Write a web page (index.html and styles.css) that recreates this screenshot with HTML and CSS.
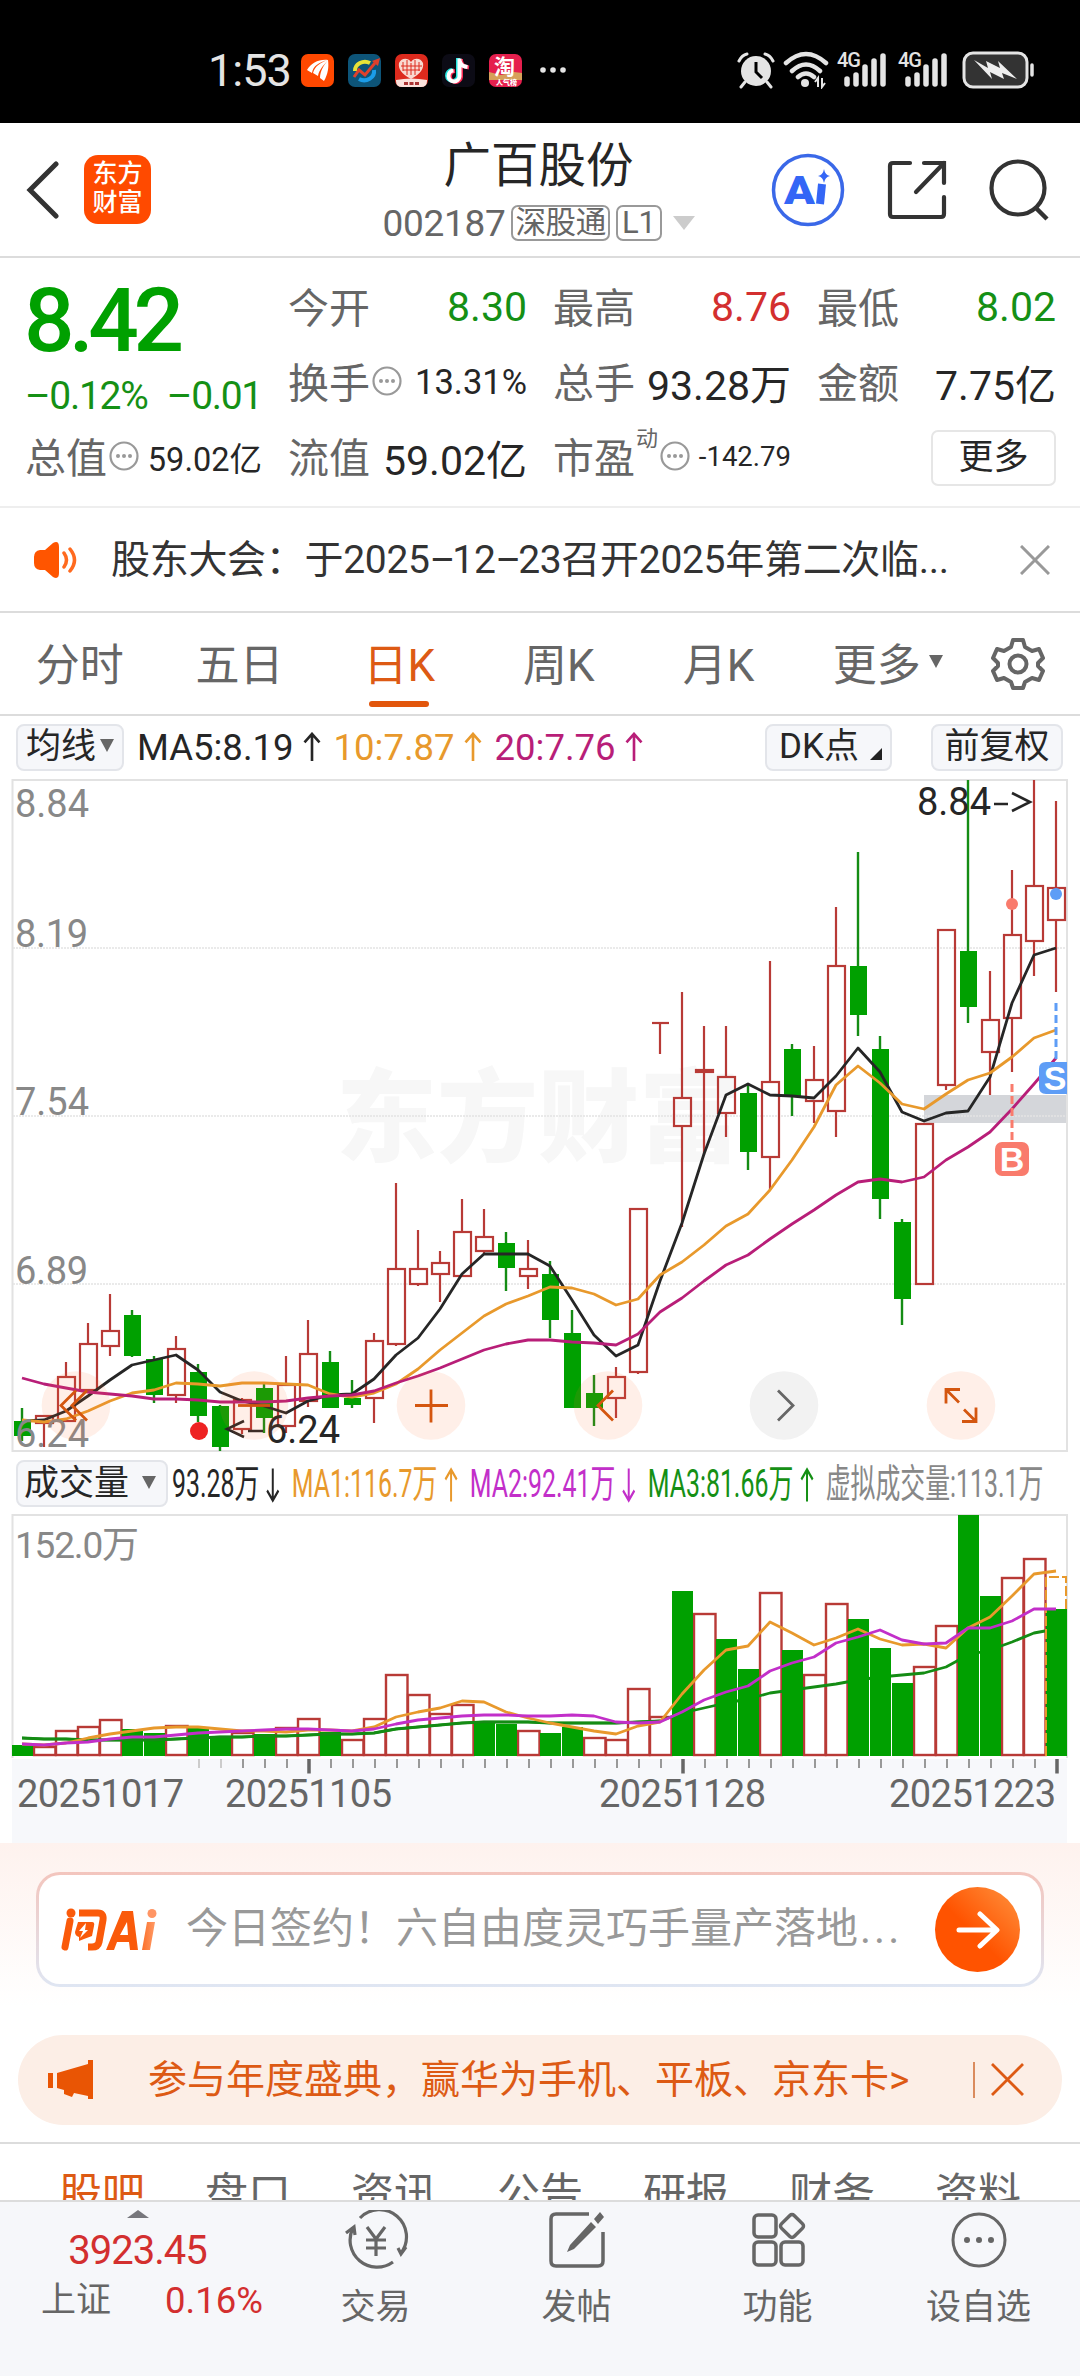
FILE: index.html
```html
<!DOCTYPE html>
<html lang="zh-CN">
<head>
    <meta charset="UTF-8">
    <meta name="viewport" content="width=device-width, initial-scale=1.0">
    <title>广百股份 002187</title>
    <link rel="stylesheet" href="styles.css">
</head>
<body>
    <svg class="defs" width="0" height="0">
        <symbol id="up" viewBox="0 0 20 32"><path d="M10 31V2M2 11L10 2l8 9" fill="none" stroke="currentColor" stroke-width="2.8"/></symbol>
        <symbol id="down" viewBox="0 0 20 32"><path d="M10 1v29M2 21l8 9 8-9" fill="none" stroke="currentColor" stroke-width="2.8"/></symbol>
        <symbol id="info" viewBox="0 0 30 30"><circle cx="15" cy="15" r="13.5" fill="none" stroke="#999" stroke-width="2.2"/><g fill="#999"><circle cx="9" cy="15" r="2"/><circle cx="15" cy="15" r="2"/><circle cx="21" cy="15" r="2"/></g></symbol>
    </svg>

    <!-- 状态栏 -->
    <div class="status-bar">
        <span class="time">1:53</span>
        <div class="apps">
            <svg width="33" height="33" viewBox="0 0 33 33"><rect width="33" height="33" rx="7" fill="#ff4800"/><path d="M6 16C10 9 18 5 27 6C18 8 12 12 11 19zM12 19C14 12 20 8 27 6C22 12 18 16 17 22zM19 24C19 17 23 11 27 6C28 13 27 20 23 27z" fill="#fff"/></svg>
            <svg width="33" height="33" viewBox="0 0 33 33"><rect width="33" height="33" rx="7" fill="#0d5478"/><path d="M7 17a10 9 0 0 1 15-8" fill="none" stroke="#e8e337" stroke-width="4"/><path d="M26 16a10 9 0 0 1-15 9" fill="none" stroke="#1b9ce8" stroke-width="4"/><path d="M6 23l5-7 6 5 10-12" fill="none" stroke="#e0402c" stroke-width="3"/><path d="M24 7l8-3-2 8z" fill="#e0402c"/></svg>
            <svg width="33" height="33" viewBox="0 0 33 33"><rect width="33" height="33" rx="7" fill="#dd2a1d"/><path d="M16 25C6 20 3 14 4 9c2-5 9-6 12-1 3-5 10-4 12 1 1 5-2 11-12 16z" fill="#f9d9d0"/><path d="M8 8v9M12 6v15M16 9v12M20 6v15M24 8v9M6 12h21M8 16h17" stroke="#dd2a1d" stroke-width="1"/><path d="M1 26q15-3 31 0v1q0 6-6 6H7q-6 0-6-6z" fill="#fbe2dc"/><path d="M9 28h4v3H9zM14.500 28h4v3h-4zM20 28h4v3h-4z" fill="#a33"/></svg>
            <svg width="33" height="33" viewBox="0 0 33 33"><rect width="33" height="33" rx="7" fill="#0c0b15"/><g fill="none" stroke-width="4"><path d="M17 4v18a5.500 5.500 0 1 1-6-6M17 6c1 5 4 6 8 6.500" stroke="#26e5e0" transform="translate(-1 0)"/><path d="M17 4v18a5.500 5.500 0 1 1-6-6M17 6c1 5 4 6 8 6.500" stroke="#fb2b54" transform="translate(2 1)"/><path d="M17 4v18a5.500 5.500 0 1 1-6-6M17 6c1 5 4 6 8 6.500" stroke="#fff" transform="translate(.5 .5)"/></g></svg>
            <svg width="33" height="33" viewBox="0 0 33 33"><rect width="33" height="33" rx="7" fill="#e51f4d"/><path d="M0 18l12 3 13-3 8 1v7H0z" fill="#d6a05a"/><text x="5" y="20" font-size="21" font-weight="700" fill="#fff">淘</text><text x="7" y="31" font-size="7" font-weight="900" fill="#fff">人气榜</text></svg>
        </div>
        <svg class="more-dots" width="28" height="8" viewBox="0 0 28 8"><g fill="#e4e4e4"><circle cx="4" cy="4" r="2.800"/><circle cx="14" cy="4" r="2.800"/><circle cx="24" cy="4" r="2.800"/></g></svg>
        <div class="sys">
            <svg width="38" height="38" viewBox="0 0 38 38"><circle cx="19" cy="20" r="15" fill="#e4e4e4"/><path d="M19 11v10l6 6" fill="none" stroke="#000" stroke-width="3"/><path d="M2 10Q5 4 10 3M36 10Q33 4 28 3M8 31l-4 5M30 31l4 5" stroke="#e4e4e4" stroke-width="3" fill="none" stroke-linecap="round"/></svg>
            <svg width="46" height="38" viewBox="0 0 46 38"><g fill="none" stroke="#e4e4e4" stroke-width="4.500" stroke-linecap="round"><path d="M3 12Q23-6 43 12M9 20Q23 7 37 20M15 26Q23 19 31 26"/></g><circle cx="22" cy="32" r="4" fill="#e4e4e4"/><path d="M35 36v-9l-3 4M39 27v9l3-4" fill="none" stroke="#e4e4e4" stroke-width="2"/></svg>
            <div class="signal"><span>4G</span><svg width="50" height="38" viewBox="0 0 50 38"><path d="M10 33v-5M19 33v-9M28 33V16M37 33V10M46 33V5" stroke="#e4e4e4" stroke-width="5.500" stroke-linecap="round"/></svg></div>
            <div class="signal sig2"><span>4G</span><svg width="50" height="38" viewBox="0 0 50 38"><path d="M10 33v-5M19 33v-9M28 33V16M37 33V10M46 33V5" stroke="#e4e4e4" stroke-width="5.500" stroke-linecap="round"/></svg></div>
            <svg width="74" height="40" viewBox="0 0 74 40"><rect x="2" y="3" width="63" height="34" rx="9" fill="#333" stroke="#e4e4e4" stroke-width="3"/><path d="M12 10l14 8-2-7 14 7-2-7 19 18-15-6 2 6-14-7 2 7z" fill="#eee"/><path d="M70 15v10" stroke="#e4e4e4" stroke-width="3.500" stroke-linecap="round"/></svg>
        </div>
    </div>

    <!-- 标题栏 -->
    <header class="header">
        <div class="header-left">
            <svg width="34" height="58" viewBox="0 0 34 58"><path d="M30 3L4 29l26 26" fill="none" stroke="#333" stroke-width="5" stroke-linecap="round"/></svg>
            <div class="brand">东方<br>财富</div>
        </div>
        <div class="stock">
            <h1>广百股份</h1>
            <div class="stock-code"><span>002187</span><i class="tag">深股通</i><i class="tag">L1</i><b class="tri"></b></div>
        </div>
        <div class="header-right">
            <svg width="74" height="74" viewBox="0 0 74 74"><circle cx="37" cy="37" r="34.500" fill="none" stroke="#3a68e8" stroke-width="3.500"/><text x="13" y="51" font-size="39" font-weight="900" fill="#3466f6" textLength="31" lengthAdjust="spacingAndGlyphs">A</text><path d="M51 31l-2 20" stroke="#3466f6" stroke-width="8"/><path d="M53 16q1 6 6 7-5 1-6 7-1-6-6-7 5-1 6-7z" fill="#3466f6"/></svg>
            <svg width="60" height="60" viewBox="0 0 60 60"><path d="M23 3H6q-3 0-3 3v48q0 3 3 3h48q3 0 3-3V37M37 3h20v20M57 3L29 32" fill="none" stroke="#333" stroke-width="4.200" stroke-linecap="round"/></svg>
            <svg width="62" height="62" viewBox="0 0 62 62"><circle cx="29" cy="29" r="26.500" fill="none" stroke="#333" stroke-width="4.200"/><path d="M47 49l11 11" stroke="#333" stroke-width="4.500"/></svg>
        </div>
    </header>

    <!-- 行情数据 -->
    <section class="quote">
        <div class="quote-main">
            <div class="price">8.42</div>
            <div class="change"><span>–0.12%</span><span>–0.01</span></div>
            <div class="cell"><label>总值</label><svg class="info"><use href="#info"/></svg><span class="num s32">59.02亿</span></div>
        </div>
        <div class="quote-grid">
            <div class="cell"><label>今开</label><span class="num green">8.30</span></div>
            <div class="cell"><label>最高</label><span class="num red">8.76</span></div>
            <div class="cell"><label>最低</label><span class="num green">8.02</span></div>
            <div class="cell"><label>换手</label><svg class="info"><use href="#info"/></svg><span class="num s35">13.31%</span></div>
            <div class="cell"><label>总手</label><span class="num">93.28万</span></div>
            <div class="cell"><label>金额</label><span class="num">7.75亿</span></div>
            <div class="cell"><label>流值</label><span class="num">59.02亿</span></div>
            <div class="cell"><label>市盈</label><sup>动</sup><svg class="info"><use href="#info"/></svg><span class="num s28">-142.79</span></div>
            <div class="cell"><button class="more-btn">更多</button></div>
        </div>
    </section>

    <!-- 公告 -->
    <div class="notice">
        <svg width="46" height="38" viewBox="0 0 46 38"><path d="M7 9h5L20 2q6-3 6 4v26q0 7-6 4l-8-7H7q-6-1-6-7v-6q0-6 6-7z" fill="#ff5500"/><path d="M31 12q5 7 0 14M37 8q9 11 0 22" fill="none" stroke="#ff6a1f" stroke-width="3.500" stroke-linecap="round"/></svg>
        <p>股东大会：于2025<i>–</i>12<i>–</i>23召开2025年第二次临...</p>
        <svg width="30" height="30" viewBox="0 0 30 30"><path d="M1 1l28 28M29 1L1 29" stroke="#999" stroke-width="3"/></svg>
    </div>

    <!-- 周期切换 -->
    <nav class="period">
        <a>分时</a><a>五日</a><a class="active">日K</a><a>周K</a><a>月K</a>
        <a class="period-more">更多<b class="tri"></b></a>
        <a class="gear"><svg width="54" height="54" viewBox="0 0 54 54"><g fill="none" stroke="#666" stroke-width="4" stroke-linejoin="round"><path d="M22 3h10l2 7 7 4 7-2 4 9-5 5v3l5 5-4 9-7-2-7 4-2 6H22l-2-6-7-4-7 2-4-9 5-5v-3l-5-5 4-9 7 2 7-4z"/><circle cx="27" cy="27" r="8.500"/></g></svg></a>
    </nav>

    <div class="ma-row">
        <button class="chip">均线<b class="tri"></b></button>
        <span class="ma5">MA5:8.19<svg><use href="#up"/></svg></span>
        <span class="ma10">10:7.87<svg><use href="#up"/></svg></span>
        <span class="ma20">20:7.76<svg><use href="#up"/></svg></span>
        <button class="chip dk">DK点<b class="corner"></b></button>
        <button class="chip fq">前复权</button>
    </div>

    <svg id="kline" class="chart" width="1080" height="676" viewBox="0 778 1080 676"></svg>

    <div class="vol-row">
        <button class="chip">成交量<b class="tri"></b></button>
        <div class="vol-text">
            <span>93.28万<svg><use href="#down"/></svg></span>
            <span class="ma10">MA1:116.7万<svg><use href="#up"/></svg></span>
            <span class="violet">MA2:92.41万<svg><use href="#down"/></svg></span>
            <span class="green">MA3:81.66万<svg><use href="#up"/></svg></span>
            <span class="gray">虚拟成交量:113.1万</span>
        </div>
    </div>

    <svg id="volume" class="chart" width="1080" height="330" viewBox="0 1513 1080 330"></svg>

    <!-- 问AI -->
    <section class="ask">
        <div class="ask-box">
            <svg width="98" height="44" viewBox="0 0 98 44">
                <defs><linearGradient id="og" x1="0" x2="1"><stop offset=".6" stop-color="#fa5a0a"/><stop offset="1" stop-color="#ff9a66"/></linearGradient></defs>
                <g fill="none" stroke="#fa5a0a" stroke-width="7"><path d="M10 13L5 39" stroke-linecap="round"/><path d="M19 5h19q6 0 5 7l-4 22q-1 5-7 5h-4"/></g>
                <circle cx="11" cy="5" r="4.500" fill="#fa5a0a"/>
                <path d="M18 14h14q3 0 2 4l-2 10-8 3-5 2v-4q-4-1-4-5z" fill="#fa5a0a"/><path d="M26 15l-7 8h4l-3 7 8-8h-3z" fill="#fff"/>
                <path d="M46 42L62 3h11l5 39h-8l-1-8H57l-3 8zM60 27h8l-1-13zM82 42l5-28h8l-5 28z" fill="url(#og)"/><circle cx="92" cy="5.500" r="4.500" fill="#ff9564"/>
            </svg>
            <p>今日签约！六自由度灵巧手量产落地<i>...</i></p>
            <div class="go"><svg width="44" height="40" viewBox="0 0 44 40"><path d="M3 20h37M24 4l17 16-17 16" fill="none" stroke="#fff" stroke-width="5" stroke-linecap="round" stroke-linejoin="round"/></svg></div>
        </div>
    </section>

    <div class="promo">
        <svg width="46" height="40" viewBox="0 0 46 40"><path d="M0 13h5v15H0zM9 13L40 4V0h5v39h-5v-3l-14-3-2 4-8-3v-4l-7-2z" fill="#e95504"/></svg>
        <p>参与年度盛典，赢华为手机、平板、京东卡&gt;</p>
        <svg class="promo-close" width="52" height="36" viewBox="0 0 52 36"><path d="M1 0v36" stroke="#cf6a30" stroke-width="1.500"/><path d="M19 2l31 31M50 2L19 33" stroke="#dd5a14" stroke-width="2.800"/></svg>
    </div>

    <nav class="sub-tabs">
        <a class="active">股吧</a><a>盘口</a><a>资讯</a><a>公告</a><a>研报</a><a>财务</a><a>资料</a>
    </nav>

    <!-- 底部栏 -->
    <footer class="bottom">
        <div class="index">
            <b class="tri-up"></b>
            <div class="index-val">3923.45</div>
            <div class="index-sub"><span>上证</span><span class="red">0.16%</span></div>
        </div>
        <div class="tool"><svg width="66" height="60" viewBox="0 0 66 60"><g fill="none" stroke="#666" stroke-width="3.200"><path d="M17 8A27 27 0 0 1 58 43M50 52A27 27 0 0 1 10 18"/><path d="M3 23l8-6 1 8M63 37l-5 7-3-6"/><path d="M24 17l9 12 9-12M33 29v17M23 30h20M23 38h20"/></g></svg><span>交易</span></div>
        <div class="tool"><svg width="60" height="60" viewBox="0 0 60 60"><path d="M42 4H9Q4 4 4 9v42q0 5 5 5h42q5 0 5-5V22" fill="none" stroke="#666" stroke-width="3.500"/><path d="M44 12l5 5-22 22-7 3 3-7zM47 9l6-7 4 5-6 7z" fill="#666"/></svg><span>发帖</span></div>
        <div class="tool"><svg width="56" height="60" viewBox="0 0 56 60"><g fill="none" stroke="#666" stroke-width="3.500"><rect x="4" y="5" width="22" height="22" rx="4"/><rect x="4" y="32" width="22" height="23" rx="4"/><rect x="31" y="32" width="22" height="23" rx="4"/><rect x="33" y="7" width="18" height="18" rx="3" transform="rotate(45 42 16)"/></g></svg><span>功能</span></div>
        <div class="tool"><svg width="60" height="60" viewBox="0 0 60 60"><circle cx="30" cy="30" r="26" fill="none" stroke="#666" stroke-width="3"/><g fill="#666"><circle cx="18" cy="30" r="3"/><circle cx="30" cy="30" r="3"/><circle cx="42" cy="30" r="3"/></g></svg><span>设自选</span></div>
    </footer>

    <script src="chart.js"></script>
</body>
</html>
```
FILE: styles.css
```css
* {
    box-sizing: border-box;
}

body {
    margin: 0;
    width: 1080px;
    height: 2376px;
    overflow: hidden;
    display: flex;
    flex-direction: column;
    background: #fff;
    color: #262626;
    font-family: Roboto, "Noto Sans CJK SC", sans-serif;
}

body > * {
    flex-shrink: 0;
}

h1, p {
    margin: 0;
    font-weight: 400;
}

i {
    font-style: normal;
}

button {
    font-family: inherit;
    color: inherit;
    padding: 0;
}

.defs {
    position: absolute;
}

.green { color: #159015; }
.red { color: #d32f2f; }
.violet { color: #c22fc9; }
.gray { color: #888; }
.ma10 { color: #e8992c; }
.ma20 { color: #b81e78; }

.tri {
    display: inline-block;
    border: 7.5px solid transparent;
    border-top: 13px solid #666;
    border-bottom: 0;
}

/* 状态栏 */
.status-bar {
    height: 123px;
    padding: 17px 44px 0 208px;
    background: #000;
    color: #e4e4e4;
    display: flex;
    align-items: center;
}

.time {
    width: 93px;
    font-size: 45px;
    letter-spacing: -1px;
}

.apps {
    display: flex;
    gap: 14px;
}

.more-dots {
    margin-left: 17px;
}

.sys {
    margin-left: auto;
    display: flex;
    align-items: center;
    gap: 8px;
}

.signal {
    position: relative;
    height: 38px;
}

.signal span {
    position: absolute;
    left: 0;
    top: -1px;
    font-size: 20px;
    line-height: 20px;
    font-weight: 500;
    letter-spacing: -1px;
}

.sig2 {
    margin: 0 6px 0 3px;
}

/* 标题栏 */
.header {
    height: 135px;
    padding: 0 29px 0 26px;
    border-bottom: 2px solid #dcdcdc;
    display: grid;
    grid-template-columns: 1fr 320px 1fr;
    align-items: center;
}

.header-left {
    display: flex;
    align-items: center;
    gap: 24px;
}

.brand {
    width: 67px;
    height: 69px;
    border-radius: 14px;
    background: #ff4a00;
    color: #fff;
    font-size: 25px;
    font-weight: 500;
    line-height: 29px;
    text-align: center;
    padding-top: 4px;
}

.stock {
    text-align: center;
    padding-top: 5px;
}

.stock h1 {
    font-size: 47.5px;
    line-height: 60px;
}

.stock-code {
    display: flex;
    align-items: center;
    justify-content: center;
    gap: 6px;
    height: 50px;
    margin-top: 2px;
    color: #666;
    font-size: 37px;
    letter-spacing: -.3px;
    white-space: nowrap;
}

.tag {
    height: 36px;
    line-height: 31px;
    padding: 0 2px;
    border: 2px solid #999;
    border-radius: 7px;
    font-size: 30.5px;
}

.tag + .tag {
    padding: 0 4px;
    font-size: 31px;
}

.stock-code .tri {
    margin-left: 5px;
    border-width: 14px 11px 0;
    border-top-color: #ccc;
}

.header-right {
    display: flex;
    align-items: center;
    justify-content: flex-end;
    gap: 42px;
}

/* 行情 */
.quote {
    height: 250px;
    padding: 12px 24px 0 25px;
    border-bottom: 2px solid #eee;
    display: flex;
    gap: 26px;
}

.quote-main {
    width: 237px;
}

.price {
    height: 100px;
    line-height: 101px;
    margin-left: -1px;
    font-size: 89px;
    font-weight: 500;
    letter-spacing: -5.5px;
    color: #00a000;
}

.change {
    height: 50px;
    line-height: 52px;
    display: flex;
    justify-content: space-between;
    font-size: 39px;
    letter-spacing: -1.3px;
    color: #159015;
}

.quote-grid {
    flex: 1;
    display: grid;
    grid-template-columns: 239px 238px 239px;
    grid-auto-rows: 75px;
    column-gap: 26px;
}

.cell {
    height: 75px;
    display: flex;
    align-items: center;
    white-space: nowrap;
}

.cell label {
    padding-bottom: 6px;
    font-size: 41px;
    color: #666;
}

.cell sup {
    font-size: 22px;
    line-height: 22px;
    color: #666;
    align-self: flex-start;
    margin: 8px 0 0 1px;
}

.info {
    width: 30px;
    height: 30px;
    margin: 0 0 3px 2px;
    flex-shrink: 0;
}

.num {
    margin-left: auto;
    padding-bottom: 2px;
    font-size: 41px;
}

.s35 { font-size: 34.5px; }
.s32 { font-size: 32.5px; }
.s28 { font-size: 27.5px; }

.more-btn {
    width: 125px;
    height: 56px;
    margin-left: auto;
    border: 2px solid #e6e6e6;
    border-radius: 7px;
    background: #fff;
    font-size: 35px;
    line-height: 48px;
}

/* 公告 */
.notice {
    height: 105px;
    padding: 0 30px 0 33px;
    border-bottom: 2px solid #dcdcdc;
    display: flex;
    align-items: center;
    font-size: 39px;
}

.notice p {
    flex: 1;
    margin: -8px 0 0 32px;
    letter-spacing: -.3px;
    white-space: nowrap;
    color: #333;
}

.notice i {
    letter-spacing: -3px;
}

/* 周期 */
.period {
    height: 103px;
    border-bottom: 2px solid #dcdcdc;
    display: grid;
    grid-template-columns: repeat(6, 159.700px) 1fr;
    font-size: 44px;
    color: #666;
}

.period a {
    display: flex;
    align-items: center;
    justify-content: center;
    position: relative;
    padding-bottom: 4px;
}

.period .active {
    color: #dd5a14;
}

.period .active::after {
    content: "";
    position: absolute;
    left: 50%;
    bottom: 7px;
    width: 60px;
    height: 6px;
    margin-left: -30px;
    border-radius: 3px;
    background: #e2560c;
}

.period-more {
    gap: 8px;
    padding-left: 19px;
}

.period .gear {
    justify-content: flex-start;
    padding: 0 0 0 33px;
}

/* 均线行 */
.ma-row {
    height: 62px;
    padding: 0 17px 0 16px;
    display: flex;
    align-items: center;
    font-size: 36.5px;
}

.chip {
    height: 47px;
    flex-shrink: 0;
    padding: 0 8px;
    border: 2px solid #e3e5ea;
    border-radius: 8px;
    background: #f6f7fa;
    font-size: 35px;
    line-height: 40px;
    white-space: nowrap;
}

.chip .tri {
    margin-left: 4px;
    vertical-align: 6px;
}

.ma-row span {
    display: flex;
    align-items: center;
    margin-right: 12px;
}

.ma-row .chip + span {
    margin-left: 13px;
}

.ma-row span svg {
    width: 20px;
    height: 30px;
    margin-left: 8px;
}

.ma-row .dk {
    width: 127px;
    margin: 0 39px 0 auto;
    padding: 0 0 0 12px;
    text-align: left;
}

.ma-row .fq {
    width: 132px;
}

.corner {
    display: inline-block;
    margin-left: 11px;
    vertical-align: -2px;
    border-left: 12px solid transparent;
    border-bottom: 12px solid #222;
}

.chart {
    display: block;
}

/* 成交量行 */
.vol-row {
    height: 59px;
    padding-left: 16px;
    display: flex;
    align-items: center;
}

.vol-row .chip {
    width: 152px;
    padding: 0 6px;
    text-align: left;
}

.vol-row .tri {
    margin-left: 13px;
}

/* 指标文字较长，横向压缩 */
.vol-text {
    width: 1349px;
    flex-shrink: 0;
    margin: -8px 0 0 4px;
    display: flex;
    justify-content: space-between;
    font-size: 38.5px;
    transform: scaleX(.646);
    transform-origin: left;
    white-space: nowrap;
}

.vol-text svg {
    width: 22px;
    height: 36px;
    margin-left: 10px;
    vertical-align: -6px;
}

/* 问AI */
.ask {
    height: 192px;
    padding: 29px 36px 0;
    background: linear-gradient(#fef2ee, #fff 85%);
}

.ask-box {
    height: 115px;
    padding: 0 21px;
    border: 3px solid transparent;
    border-radius: 24px;
    background: linear-gradient(#fff, #fff) padding-box, linear-gradient(#f3c5bd, #dfe6f3) border-box;
    display: flex;
    align-items: center;
}

.ask-box p {
    flex: 1;
    margin: -10px 0 0 28px;
    font-size: 42px;
    color: #999;
    white-space: nowrap;
}

.ask-box i {
    letter-spacing: 3px;
    margin-left: 2px;
}

.go {
    width: 85px;
    height: 85px;
    border-radius: 50%;
    background: linear-gradient(45deg, #ff5300 45%, #ff9440);
    display: flex;
    align-items: center;
    justify-content: center;
}

.promo {
    height: 90px;
    margin: 0 18px;
    padding: 0 37px 0 30px;
    border-radius: 45px;
    background: #fceee6;
    color: #dd5a14;
    display: flex;
    align-items: center;
}

.promo p {
    flex: 1;
    margin: -8px 0 0 54px;
    font-size: 39px;
}

.sub-tabs {
    height: 58px;
    margin-top: 17px;
    padding: 19px 29px 0;
    border-top: 2px solid #dcdcdc;
    overflow: hidden;
    display: grid;
    grid-template-columns: repeat(7, 1fr);
    text-align: center;
    font-size: 43px;
    line-height: 62px;
    color: #666;
}

.sub-tabs .active {
    color: #dd5a14;
}

/* 底部栏 */
.bottom {
    height: 176px;
    border-top: 2px solid #dcdcdc;
    background: #f6f7fa;
    display: grid;
    grid-template-columns: 275px repeat(4, 201px);
    color: #666;
}

.index {
    text-align: center;
}

.tri-up {
    display: block;
    width: 22px;
    margin: 8px auto 0;
    border: 11px solid transparent;
    border-top: 0;
    border-bottom: 8px solid #77777c;
}

.index-val {
    margin-top: 9px;
    font-size: 40px;
    line-height: 48px;
    letter-spacing: -1px;
    color: #d32f2f;
}

.index-sub {
    display: flex;
    justify-content: space-between;
    align-items: center;
    padding: 0 12px 0 41px;
    line-height: 52px;
    font-size: 35px;
}

.index-sub .red {
    font-size: 36.5px;
}

.tool {
    display: flex;
    flex-direction: column;
    align-items: center;
    padding-top: 8px;
    font-size: 35px;
}

.tool span {
    margin-top: 13px;
    line-height: 50px;
}
```
FILE: chart.js
```js
const STEP = 22, X0 = 22;
const x = i => X0 + i * STEP;
const RED = '#b83a36', GREEN = '#00a000';

// 颜色, 最高, 实体上沿, 实体下沿, 最低
const candles = [
    ['g', 1408, 1421, 1436, 1441], ['r', 1415, 1416, 1423, 1447], ['r', 1362, 1377, 1421, 1421],
    ['r', 1323, 1344, 1390, 1390], ['r', 1294, 1331, 1346, 1356], ['g', 1310, 1315, 1356, 1357],
    ['g', 1356, 1359, 1395, 1403], ['r', 1336, 1349, 1395, 1403], ['g', 1364, 1372, 1416, 1422],
    ['g', 1405, 1406, 1447, 1451], ['r', 1398, 1400, 1429, 1434], ['g', 1384, 1388, 1418, 1433],
    ['r', 1356, 1385, 1426, 1433], ['r', 1320, 1354, 1401, 1407], ['g', 1351, 1362, 1408, 1408],
    ['g', 1380, 1398, 1405, 1408], ['r', 1333, 1341, 1398, 1423], ['r', 1183, 1269, 1344, 1346],
    ['r', 1230, 1269, 1284, 1286], ['r', 1251, 1263, 1274, 1302], ['r', 1199, 1232, 1276, 1276],
    ['r', 1209, 1237, 1251, 1253], ['g', 1232, 1243, 1268, 1291], ['r', 1240, 1269, 1276, 1289],
    ['g', 1261, 1274, 1320, 1338], ['g', 1310, 1333, 1408, 1408], ['g', 1375, 1393, 1408, 1426],
    ['r', 1367, 1377, 1398, 1418], ['r', 1209, 1209, 1372, 1374], ['r', 1023, 1023, 1023, 1054],
    ['r', 992, 1098, 1126, 1227], ['r', 1026, 1070, 1072, 1155], ['r', 1026, 1077, 1113, 1137],
    ['g', 1083, 1093, 1152, 1170], ['r', 961, 1082, 1157, 1190], ['g', 1044, 1049, 1097, 1116],
    ['r', 1046, 1080, 1101, 1123], ['r', 907, 966, 1111, 1137], ['g', 852, 966, 1015, 1036],
    ['g', 1036, 1049, 1199, 1219], ['g', 1219, 1222, 1299, 1325], ['r', 1123, 1124, 1284, 1284],
    ['r', 930, 930, 1085, 1090], ['g', 780, 951, 1007, 1023], ['r', 971, 1020, 1052, 1095],
    ['r', 870, 935, 1018, 1072], ['r', 780, 886, 941, 976], ['r', 801, 888, 920, 992]
];

const ma5 = [1421,1420,1411,1396,1380,1365,1360,1355,1370,1392,1401,1406,1413,1401,1395,1394,1379,1355,1338,1309,1274,1254,1254,1254,1266,1300,1335,1356,1345,1281,1223,1154,1095,1084,1095,1096,1098,1076,1048,1072,1112,1121,1113,1111,1077,1003,955,948];
const ma10 = [1420,1422,1419,1411,1401,1393,1390,1383,1384,1386,1383,1383,1384,1385,1394,1397,1393,1384,1369,1350,1333,1316,1304,1296,1287,1288,1294,1305,1299,1275,1262,1245,1226,1214,1190,1160,1127,1085,1066,1083,1104,1109,1094,1080,1073,1057,1038,1030];
const ma20 = [1378,1384,1388,1392,1394,1396,1399,1399,1400,1402,1402,1402,1401,1398,1396,1395,1391,1383,1376,1368,1359,1350,1344,1340,1340,1342,1343,1345,1334,1312,1298,1281,1265,1255,1239,1224,1210,1195,1182,1179,1182,1177,1160,1147,1132,1109,1084,1058];

const volTop = [1745,1747,1731,1727,1720,1729,1733,1726,1727,1736,1733,1734,1728,1719,1732,1740,1719,1675,1695,1714,1705,1722,1724,1731,1733,1727,1738,1740,1689,1717,1591,1614,1639,1669,1593,1650,1675,1604,1619,1648,1683,1667,1626,1515,1596,1578,1559,1609];
const volColor = 'grrrrggrggrgrrgrrrrrrggrggrrrrgrggrgrrgggrrggrrg';

const v5 = [1744,1745,1743,1738,1734,1731,1728,1727,1727,1729,1731,1731,1732,1730,1730,1731,1727,1717,1712,1708,1701,1702,1712,1718,1723,1727,1731,1734,1726,1722,1694,1670,1650,1646,1622,1633,1645,1638,1629,1639,1645,1644,1648,1628,1617,1596,1574,1571];
const v10 = [1744,1745,1743,1742,1739,1737,1737,1735,1733,1732,1731,1730,1729,1729,1730,1731,1729,1724,1720,1718,1716,1715,1715,1716,1716,1715,1716,1722,1723,1722,1712,1700,1692,1686,1671,1663,1657,1643,1637,1630,1640,1644,1643,1628,1628,1621,1609,1609];
const v20 = [1738,1739,1739,1740,1740,1740,1740,1739,1738,1737,1737,1736,1736,1735,1734,1734,1733,1729,1727,1725,1723,1722,1722,1722,1723,1723,1723,1723,1722,1721,1713,1708,1703,1699,1693,1690,1687,1684,1680,1677,1675,1673,1667,1655,1650,1642,1633,1629];

const line = (pts, color) => `<polyline points="${pts.map((y, i) => x(i) + ',' + y).join(' ')}" fill="none" stroke="${color}" stroke-width="2.8" stroke-linejoin="round"/>`;
const text = (tx, y, s, color, len, size = 38) => `<text x="${tx}" y="${y}" font-size="${size}" fill="${color}" textLength="${len}">${s}</text>`;
const seg = (x1, y1, x2, y2, color, w = 2, extra = '') => `<line x1="${x1}" y1="${y1}" x2="${x2}" y2="${y2}" stroke="${color}" stroke-width="${w}" ${extra}/>`;

function drawKline() {
    let s = `<text x="336" y="1154" font-size="101" font-weight="900" fill="#f7f7f7" textLength="404">东方财富</text>`;
    s += `<rect x="924" y="1095" width="143" height="28" fill="#d4d6da"/>`;
    s += `<rect x="12.500" y="780" width="1054.500" height="671" fill="none" stroke="#e2e2e2" stroke-width="2"/>`;
    [948, 1116, 1284].forEach(y => { s += seg(13, y, 1067, y, '#e4e4e4', 1.5, 'stroke-dasharray="2 1"'); });

    candles.forEach(([c, hi, top, bot, lo], i) => {
        const cx = x(i), color = c === 'r' ? RED : GREEN;
        if (c === 'g') {
            s += seg(cx, hi, cx, lo, '#148c14', 2.4) + `<rect x="${cx - 8}" y="${top}" width="17" height="${bot - top}" fill="${GREEN}"/>`;
        } else if (bot === top) {
            s += seg(cx - 8, top, cx + 9, top, color, 2.2) + seg(cx, top, cx, lo, color, 2.2);
        } else {
            s += seg(cx, hi, cx, top, color, 2.2) + seg(cx, bot, cx, lo, color, 2.2);
            s += `<rect x="${cx - 8}" y="${top}" width="17" height="${bot - top}" fill="none" stroke="${color}" stroke-width="2.2"/>`;
        }
    });
    s += line(ma5, '#262626') + line(ma10, '#e8992c') + line(ma20, '#b81e78');

    s += text(15, 817, '8.84', '#888', 74) + text(15, 947, '8.19', '#888', 73) + text(15, 1115, '7.54', '#888', 74);
    s += text(15, 1284, '6.89', '#888', 73) + text(15, 1447, '6.24', '#888', 74);
    s += text(917, 815, '8.84', '#262626', 74) + text(266, 1443, '6.24', '#262626', 74);
    s += `<path d="M994 804h14M1012 793l18 9-18 9M244 1421l-17 8 17 8M248 1431h15" fill="none" stroke="#262626" stroke-width="2.600"/>`;

    // 买卖点
    s += `<circle cx="199" cy="1431" r="9" fill="#ee2222"/><circle cx="1012" cy="904" r="6" fill="#f97b6c"/><circle cx="1056" cy="894" r="6" fill="#5e9df6"/>`;
    s += seg(1056, 1003, 1056, 1061, '#5e9df6', 3, 'stroke-dasharray="8 4"') + seg(1012, 1084, 1012, 1140, '#f97b6c', 3, 'stroke-dasharray="8 4"');
    s += `<path d="M1067 1062h-21q-7 0-7 7v18q0 7 7 7h21z" fill="#5e9df6"/><rect x="995" y="1142" width="34" height="34" rx="7" fill="#f97b6c"/>`;
    s += `<g font-family="Liberation Sans" font-weight="700" font-size="34" fill="#fff" text-anchor="middle"><text x="1055" y="1090">S</text><text x="1012" y="1171">B</text></g>`;

    // 操作按钮
    const btns = [
        [76, 'M0-15l-15 15 15 15M11-15L-4 0l15 15'], [254, 'M-16 0h32'], [431, 'M-16 0h33M0-16v33'],
        [608, 'M5-15L-10 0 5 15'], [784, 'M-6-15L9 0-6 15'],
        [961, 'M-2-3L-15-16M-15-2v-14h14M3 4l12 12M15 2v14H1']
    ];
    btns.forEach(([bx, d]) => {
        const off = bx === 784;
        s += `<g transform="translate(${bx} 1405.500)"><circle r="34.300" fill="${off ? '#f2f2f2' : 'rgba(255,110,50,.11)'}"/><path d="${d}" fill="none" stroke="${off ? '#666' : '#d4560f'}" stroke-width="2.800"/></g>`;
    });
    document.getElementById('kline').innerHTML = s;
}

function drawVolume() {
    let s = `<rect x="12" y="1759" width="1055" height="84" fill="#f7f8fb"/>`;
    s += `<path d="M12.500 1758V1515H1067V1758" fill="none" stroke="#e2e2e2" stroke-width="2"/>`;
    volTop.forEach((top, i) => {
        if (volColor[i] === 'r') {
            s += `<rect x="${x(i) - 10}" y="${top}" width="21.500" height="${1755 - top}" fill="none" stroke="${RED}" stroke-width="2.400"/>`;
        }
    });
    s += line(v20, '#148c14');
    volTop.forEach((top, i) => {
        if (volColor[i] === 'g') s += `<rect x="${x(i) - 10}" y="${top}" width="21" height="${1756 - top}" fill="${GREEN}"/>`;
    });
    // 虚拟成交量
    s += `<path d="M1046 1756V1577H1066V1609" fill="none" stroke="#e8992c" stroke-width="2" stroke-dasharray="10 3"/>`;
    s += `<polyline points="${v20.slice(0, 30).map((y, i) => x(i) + ',' + y).join(' ')}" fill="none" stroke="#148c14" stroke-width="2.600"/>`;
    s += line(v5, '#e8992c') + line(v10, '#c22fc9');
    s += text(15, 1558, '152.0万', '#888', 124, 37);
    for (let i = 8; i < 48; i++) {
        const major = i === 13 || i === 30 || i === 47;
        s += seg(x(i) + 1, 1759, x(i) + 1, major ? 1773.5 : 1768, i < 10 ? '#ccc' : major ? '#666' : '#999', major ? 3.5 : 2);
    }
    s += text(17, 1807, '20251017', '#666', 167) + text(225, 1807, '20251105', '#666', 167) + text(599, 1807, '20251128', '#666', 167) + text(889, 1807, '20251223', '#666', 167);
    document.getElementById('volume').innerHTML = s;
}

drawKline();
drawVolume();
```
